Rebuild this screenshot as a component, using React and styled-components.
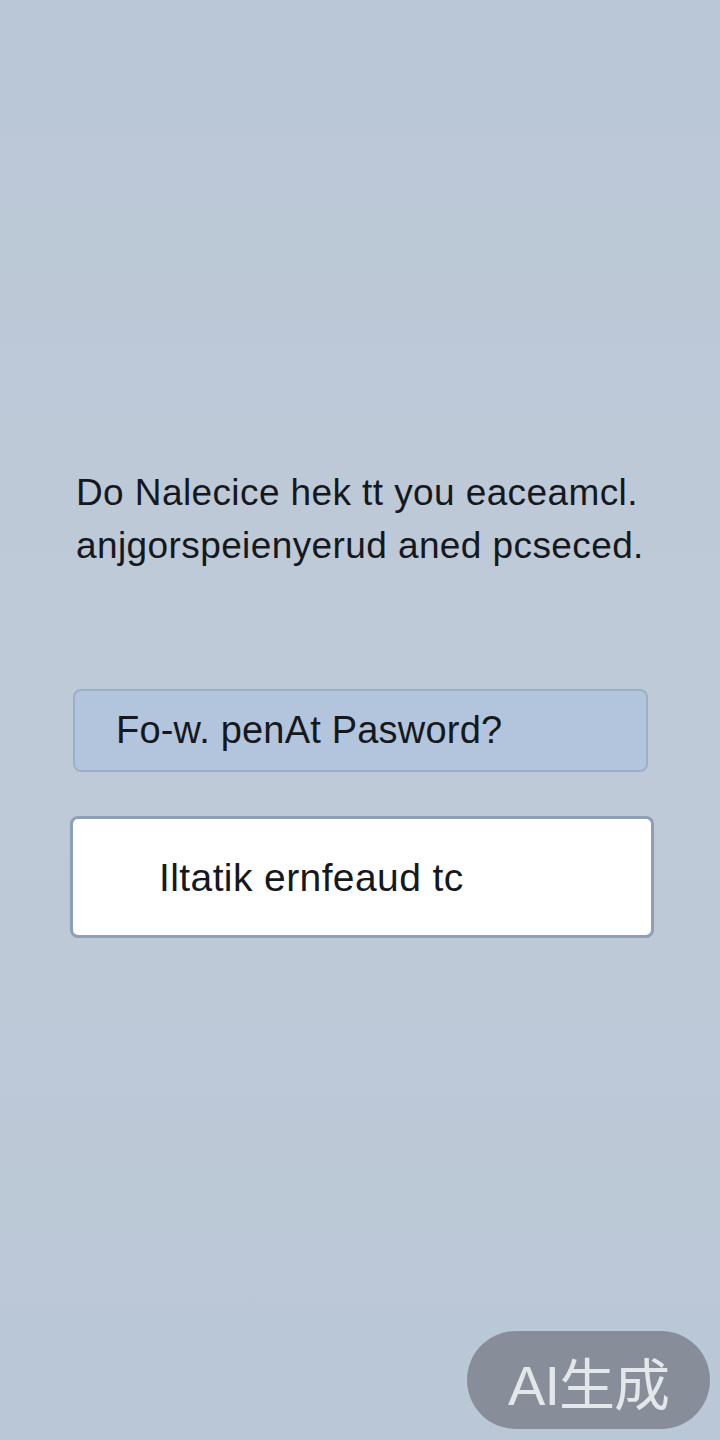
import React from 'react'
import styled, { createGlobalStyle } from 'styled-components'

const Global = createGlobalStyle`
  html, body {
    margin: 0;
    padding: 0;
  }
  body {
    background: #bcc8d6;
    font-family: 'Liberation Sans', Arial, sans-serif;
  }
`

function App() {
  return (
    <Page>
      <Global />
      <Content>
        <Message>
          Do Nalecice hek tt you eaceamcl.
          <br />
          anjgorspeienyerud aned pcseced.
        </Message>
        <LinkButton>Fo-w. penAt Pasword?</LinkButton>
        <InputBox>
          <InputText>Iltatik ernfeaud tc</InputText>
        </InputBox>
      </Content>
      <Badge>AI生成</Badge>
    </Page>
  )
}

export default App

const Page = styled.div`
    position: relative;
    width: 720px;
    height: 1440px;
    background: linear-gradient(to bottom, #bac7d6 0%, #bfcad8 50%, #bac7d6 100%);
    overflow: hidden;
`

const Content = styled.div`
    display: flex;
    flex-direction: column;
    padding: 466px 66px 0 70px;
`

const Message = styled.p`
    margin: 0 0 0 6px;
    font-family: 'Liberation Sans', Arial, sans-serif;
    font-size: 37px;
    line-height: 53px;
    letter-spacing: 0.4px;
    word-spacing: 0px;
    color: #15181d;
    white-space: nowrap;
`

const LinkButton = styled.div`
    margin: 117px 6px 0 3px;
    height: 79px;
    display: flex;
    align-items: center;
    padding-left: 41px;
    background: #b3c5dc;
    border: 2px solid #9cafc6;
    border-radius: 8px;
    font-size: 38px;
    letter-spacing: 0.2px;
    color: #15181d;
`

const InputBox = styled.div`
    margin-top: 44px;
    height: 122px;
    display: flex;
    align-items: center;
    padding-left: 86px;
    background: #ffffff;
    border: 3px solid #8f9fb6;
    border-radius: 8px;
    box-sizing: border-box;
`

const InputText = styled.span`
    font-size: 39px;
    letter-spacing: 0.4px;
    color: #15181d;
    margin-top: 2px;
`

const Badge = styled.div`
    position: absolute;
    left: 467px;
    top: 1331px;
    width: 243px;
    height: 98px;
    border-radius: 49px;
    background: #878e99;
    display: flex;
    align-items: center;
    justify-content: center;
    font-family: 'Liberation Sans', 'Noto Sans CJK SC', sans-serif;
    font-size: 56px;
    color: #e4e7ea;
    letter-spacing: -1px;
`
